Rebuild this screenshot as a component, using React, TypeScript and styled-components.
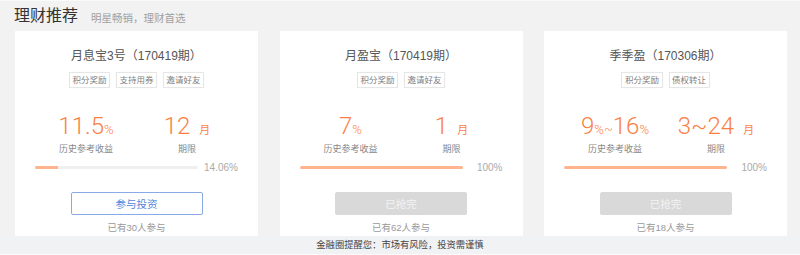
import * as React from 'react';
import styled, { createGlobalStyle } from 'styled-components';

const GlobalStyle = createGlobalStyle`
  html, body {
    margin: 0;
    padding: 0;
    background: #f2f2f2;
  }
  body {
    font-family: "Liberation Sans", "Noto Sans CJK SC", sans-serif;
  }
`;

const Page = styled.div`
  width: 800px;
  height: 255px;
  box-sizing: border-box;
  border-top: 1px solid #fafafa;
  border-bottom: 1px solid #fafafa;
  display: flex;
  flex-direction: column;
`;

const Header = styled.div`
  height: 30px;
  display: flex;
  align-items: center;
  padding-left: 14px;
`;

const Title = styled.h2`
  margin: 0;
  font-size: 16px;
  font-weight: normal;
  color: #333;
  line-height: 20px;
`;

const Subtitle = styled.span`
  margin-left: 13px;
  margin-top: 2px;
  font-size: 10.5px;
  color: #a0a0a0;
`;

const Grid = styled.div`
  display: grid;
  grid-template-columns: repeat(3, 243px);
  column-gap: 21.5px;
  padding: 0 12px 0 15px;
`;

const Card = styled.div`
  height: 205px;
  background: #fff;
  display: flex;
  flex-direction: column;
  align-items: center;
`;

const CardTitle = styled.h3`
  margin: 17px 0 0;
  font-size: 12px;
  line-height: 16px;
  font-weight: normal;
  color: #555;
`;

const Tags = styled.div`
  display: flex;
  gap: 6px;
  margin-top: 8px;
`;

const Tag = styled.span`
  height: 16px;
  box-sizing: border-box;
  border: 1px solid #e6e6e6;
  box-shadow: 0 0 1px rgba(0, 0, 0, 0.06);
  padding: 0 2.5px;
  font-size: 8.5px;
  line-height: 14px;
  color: #808080;
`;

const Stats = styled.div`
  width: 202px;
  display: grid;
  grid-template-columns: 1fr 1fr;
  margin-top: 26px;
`;

const Stat = styled.div`
  display: flex;
  flex-direction: column;
  align-items: center;
`;

const Value = styled.div`
  font-family: "Roboto", "Liberation Sans", "Noto Sans CJK SC", sans-serif;
  font-weight: 300;
  font-size: 24px;
  line-height: 24px;
  color: #fb7f45;
  white-space: nowrap;
`;

const Unit = styled.span<{ $gap?: number }>`
  font-size: 13px;
  line-height: 1;
  margin-left: ${({ $gap }) => $gap ?? 0}px;
`;

const MonthUnit = styled.span`
  font-family: "Noto Sans CJK SC", sans-serif;
  font-weight: normal;
  font-size: 11px;
  line-height: 1;
  margin-left: 9px;
`;

const Label = styled.div`
  margin-top: 5px;
  font-size: 9px;
  line-height: 12px;
  color: #888;
`;

const ProgressRow = styled.div`
  width: 203px;
  height: 12px;
  margin-top: 6px;
  display: flex;
  align-items: center;
`;

const Track = styled.div`
  width: 163px;
  height: 3px;
  background: #efefef;
  border-radius: 2px;
  overflow: hidden;
`;

const Fill = styled.div`
  height: 100%;
  background: #ffb48e;
`;

const Percent = styled.span`
  flex: 1;
  text-align: right;
  font-size: 10px;
  color: #aaa;
`;

const Button = styled.button<{ $soldOut: boolean }>`
  margin-top: 19px;
  width: 132px;
  height: 23px;
  box-sizing: border-box;
  border-radius: 2px;
  font-family: inherit;
  font-size: 10.5px;
  padding: 0;
  cursor: pointer;
  border: 1px solid ${({ $soldOut }) => ($soldOut ? '#d9d9d9' : '#88abe8')};
  background: ${({ $soldOut }) => ($soldOut ? '#d9d9d9' : '#fff')};
  color: ${({ $soldOut }) => ($soldOut ? '#f4f4f4' : '#5587dd')};
`;

const Joined = styled.div`
  margin-top: 7px;
  font-size: 9.5px;
  line-height: 12px;
  color: #999;
`;

const Footer = styled.div`
  flex: 1;
  background: #f1f2f4;
  text-align: center;
  font-size: 9.3px;
  line-height: 18px;
  color: #444;
`;

interface IProduct {
  name: string;
  issue: string;
  tags: string[];
  rates: string[];
  months: string;
  progress: number;
  soldOut: boolean;
  joined: number;
}

const products: IProduct[] = [
  {
    name: '月息宝3号',
    issue: '170419',
    tags: ['积分奖励', '支持用券', '邀请好友'],
    rates: ['11.5'],
    months: '12',
    progress: 14.06,
    soldOut: false,
    joined: 30,
  },
  {
    name: '月盈宝',
    issue: '170419',
    tags: ['积分奖励', '邀请好友'],
    rates: ['7'],
    months: '1',
    progress: 100,
    soldOut: true,
    joined: 62,
  },
  {
    name: '季季盈',
    issue: '170306',
    tags: ['积分奖励', '债权转让'],
    rates: ['9', '16'],
    months: '3~24',
    progress: 100,
    soldOut: true,
    joined: 18,
  },
];

const ProductCard = ({ data }: { data: IProduct }) => (
  <Card>
    <CardTitle>
      {data.name}（{data.issue}期）
    </CardTitle>
    <Tags>
      {data.tags.map((t) => (
        <Tag key={t}>{t}</Tag>
      ))}
    </Tags>
    <Stats>
      <Stat>
        <Value>
          {data.rates.map((r, i) => (
            <React.Fragment key={r}>
              {i > 0 && <Unit>~</Unit>}
              {r}
              <Unit>%</Unit>
            </React.Fragment>
          ))}
        </Value>
        <Label>历史参考收益</Label>
      </Stat>
      <Stat>
        <Value>
          {data.months}
          <MonthUnit>月</MonthUnit>
        </Value>
        <Label>期限</Label>
      </Stat>
    </Stats>
    <ProgressRow>
      <Track>
        <Fill style={{ width: `${data.progress}%` }} />
      </Track>
      <Percent>{data.progress}%</Percent>
    </ProgressRow>
    <Button $soldOut={data.soldOut}>{data.soldOut ? '已抢完' : '参与投资'}</Button>
    <Joined>已有{data.joined}人参与</Joined>
  </Card>
);

const App = () => (
  <>
    <GlobalStyle />
    <Page>
      <Header>
        <Title>理财推荐</Title>
        <Subtitle>明星畅销，理财首选</Subtitle>
      </Header>
      <Grid>
        {products.map((p) => (
          <ProductCard key={p.name} data={p} />
        ))}
      </Grid>
      <Footer>金融圈提醒您：市场有风险，投资需谨慎</Footer>
    </Page>
  </>
);

export default App;
